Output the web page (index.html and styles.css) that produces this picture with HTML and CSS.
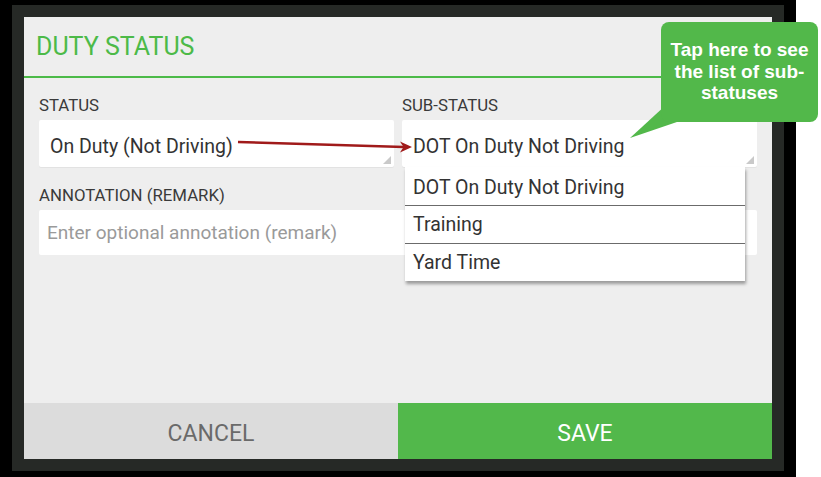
FILE: index.html
```html
<!DOCTYPE html>
<html>
<head>
<meta charset="utf-8">
<link rel="stylesheet" href="styles.css">
</head>
<body>
<div class="stage">
  <div class="shadow">
    <div class="frame">
      <div class="dialog">
        <div class="header"><h1 class="title">DUTY STATUS</h1></div>
        <div class="content">
          <div class="row">
            <div class="field">
              <div class="label">STATUS</div>
              <div class="select"><span>On Duty (Not Driving)</span><span class="corner"></span></div>
            </div>
            <div class="field">
              <div class="label">SUB-STATUS</div>
              <div class="select"><span>DOT On Duty Not Driving</span><span class="corner"></span></div>
            </div>
          </div>
          <div class="label label-annot">ANNOTATION (REMARK)</div>
          <div class="input">Enter optional annotation (remark)</div>
        </div>
        <div class="buttons">
          <div class="btn cancel">CANCEL</div>
          <div class="btn save">SAVE</div>
        </div>
        <ul class="dropdown">
          <li class="item first">DOT On Duty Not Driving</li>
          <li class="item">Training</li>
          <li class="item">Yard Time</li>
        </ul>
      </div>
    </div>
  </div>
  <svg class="arrow" width="821" height="477" viewBox="0 0 821 477">
    <line x1="238" y1="142" x2="404" y2="147" stroke="#a01a1a" stroke-width="2.4"/>
    <polygon points="412,147 400,141.5 403.5,147 400,152.5" fill="#a01a1a"/>
  </svg>
  <svg class="tail" width="60" height="42" viewBox="0 0 60 42">
    <polygon points="5,38 42,4 60,4 60,19.3" fill="#52b84a"/>
  </svg>
  <div class="callout">Tap here to see<br>the list of sub-<br>statuses</div>
</div>
</body>
</html>
```
FILE: styles.css
```css
* { box-sizing: border-box; }
html, body { margin: 0; padding: 0; background: #ffffff; }
body { font-family: Roboto, "Noto Sans", sans-serif; }

.stage {
  position: relative;
  width: 821px;
  height: 477px;
}

.shadow {
  width: 796px;
  height: 477px;
  background: #000;
  padding: 5px 12px 6px 12px;
}

.frame {
  height: 100%;
  background: #262926;
  padding: 12px;
}

.dialog {
  position: relative;
  height: 442px;
  background: #eeeeee;
  display: flex;
  flex-direction: column;
}

.header {
  height: 61px;
  border-bottom: 2px solid #4cba48;
  display: flex;
  align-items: center;
  padding-left: 12px;
}

.title {
  margin: 0;
  font-size: 25px;
  font-weight: 400;
  color: #4cba48;
}

.content {
  padding: 17px 15px 0 15px;
}

.row {
  display: grid;
  grid-template-columns: 1fr 1fr;
  column-gap: 8px;
}

.label {
  font-size: 16.8px;
  line-height: 20px;
  height: 20px;
  color: #3a3a3a;
  margin-bottom: 5px;
}

.label-annot { margin-top: 18px; }

.select {
  position: relative;
  height: 47px;
  background: #fff;
  border-radius: 2px;
  display: flex;
  align-items: center;
  padding: 5px 11px 0 11px;
  font-size: 19.5px;
  color: #333;
  box-shadow: 0 1px 0 #e2e2e2;
}

.corner {
  position: absolute;
  right: 3px;
  bottom: 3px;
  width: 0;
  height: 0;
  border-left: 8px solid transparent;
  border-bottom: 8px solid #c9c9c9;
}

.input {
  height: 45px;
  background: #fff;
  border-radius: 2px;
  display: flex;
  align-items: center;
  padding: 0 8px;
  font-size: 19px;
  color: #9a9a9a;
}

.buttons {
  margin-top: auto;
  height: 56px;
  display: flex;
}

.btn {
  flex: 1;
  display: flex;
  align-items: center;
  justify-content: center;
  padding-top: 4px;
  font-size: 23px;
}

.cancel { background: #dcdcdc; color: #6a6a6a; }
.save { background: #52b84b; color: #fff; }

.dropdown {
  position: absolute;
  left: 381px;
  top: 150px;
  width: 340px;
  margin: 0;
  padding: 0;
  list-style: none;
  background: #fff;
  box-shadow: 1px 3px 3px rgba(0, 0, 0, 0.35);
}

.item {
  height: 38px;
  display: flex;
  align-items: center;
  padding: 0 8px;
  font-size: 19.5px;
  color: #333;
  border-bottom: 1px solid #6b6b6b;
}

.item.first { padding-top: 3px; height: 39px; }
.item:last-child { border-bottom: none; height: 37px; }

.arrow {
  position: absolute;
  left: 0;
  top: 0;
  pointer-events: none;
}

.tail {
  position: absolute;
  left: 625px;
  top: 100px;
}

.callout {
  position: absolute;
  left: 661px;
  top: 22px;
  width: 157px;
  height: 100px;
  background: #52b84a;
  border-radius: 8px;
  color: #fff;
  font-family: "Liberation Sans", Arial, sans-serif;
  font-weight: bold;
  font-size: 19px;
  line-height: 21.7px;
  text-align: center;
  white-space: nowrap;
  padding-top: 17px;
}
```
